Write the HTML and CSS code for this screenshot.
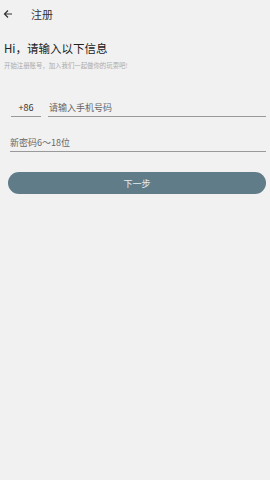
FILE: index.html
```html
<!DOCTYPE html>
<html lang="zh-CN">
<head>
    <meta charset="UTF-8">
    <meta name="viewport" content="width=device-width, initial-scale=1.0">
    <title>注册</title>
    <link rel="stylesheet" href="styles.css">
</head>
<body>
    <div class="top-bar">
        <span class="back">
            <svg width="10" height="10" viewBox="0 0 10 10">
                <path d="M9 5H1.5M5 1.5L1.5 5L5 8.5" fill="none" stroke="#333" stroke-width="1.2"/>
            </svg>
        </span>
        <span class="title">注册</span>
    </div>

    <div class="intro">
        <h1>Hi，请输入以下信息</h1>
        <p class="sub">开始注册账号，加入我们一起做你的玩耍吧!</p>
    </div>

    <div class="form">
        <div class="phone-row">
            <div class="code">+86</div>
            <div class="field phone">请输入手机号码</div>
        </div>
        <div class="field pwd">新密码6～18位</div>
        <button class="next">下一步</button>
    </div>
</body>
</html>
```

FILE: styles.css
```css
body {
    margin: 0;
    padding: 0;
    background-color: #f1f1f1;
    font-family: "Noto Sans CJK SC", "Noto Sans", sans-serif;
    color: #333;
}

.top-bar {
    height: 27px;
    display: flex;
    align-items: center;
}

.back {
    width: 31px;
    padding-left: 3px;
    box-sizing: border-box;
    display: flex;
    align-items: center;
}

.title {
    font-size: 11px;
    color: #333;
}

.intro {
    padding: 12px 4px 0;
}

h1 {
    margin: 0;
    font-size: 11.5px;
    font-weight: normal;
    color: #222;
    line-height: 18px;
}

.sub {
    margin: 4px 0 0;
    font-size: 6.4px;
    color: #aaa;
    line-height: 10px;
}

.form {
    padding: 0 4px 0 8px;
}

.phone-row {
    display: flex;
    gap: 7px;
    margin-top: 30px;
}

.code {
    width: 30px;
    margin-left: 3px;
    font-size: 9px;
    text-align: center;
    color: #333;
    padding-bottom: 1px;
    border-bottom: 1px solid #999;
    line-height: 14px;
}

.field {
    font-size: 9px;
    color: #666;
    padding-bottom: 1px;
    border-bottom: 1px solid #999;
    line-height: 14px;
}

.phone {
    flex: 1;
    padding-left: 1px;
}

.pwd {
    margin: 19px 0 0 2px;
}

.next {
    display: block;
    width: 258px;
    height: 22px;
    margin: 20px 0 0 0;
    border: none;
    border-radius: 11px;
    background-color: #617c89;
    color: #e8eef0;
    font-family: inherit;
    font-size: 9px;
    padding: 0;
}
```
